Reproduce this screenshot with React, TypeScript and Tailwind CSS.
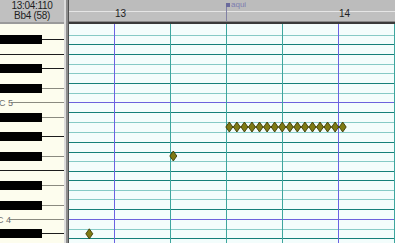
import React from "react";

// grid row lines (y in page coords) and their colour
const rowLines: { y: number; c: "l" | "d" | "c" }[] = [
  { y: 35, c: "l" }, { y: 44, c: "d" }, { y: 54, c: "d" }, { y: 64, c: "l" },
  { y: 73, c: "l" }, { y: 83, c: "d" }, { y: 93, c: "l" }, { y: 102, c: "c" },
  { y: 112, c: "d" }, { y: 122, c: "l" }, { y: 132, c: "l" }, { y: 142, c: "d" },
  { y: 152, c: "d" }, { y: 161, c: "l" }, { y: 171, c: "d" }, { y: 180, c: "d" },
  { y: 190, c: "l" }, { y: 199, c: "l" }, { y: 209, c: "d" }, { y: 219, c: "c" },
  { y: 229, c: "l" }, { y: 238, c: "d" },
];

const lineColor = { l: "#86cac6", d: "#15807a", c: "#6c62dc" };

// vertical lines: bars are violet, beats teal
const beats = [
  { x: 114, bar: true }, { x: 170, bar: false }, { x: 226, bar: false },
  { x: 282, bar: false }, { x: 338, bar: true }, { x: 394, bar: false },
];

// black keys: top y of each, 9px tall
const blackKeys = [35, 64, 84, 113, 132, 152, 181, 201, 229];
// short separator lines in the middle of black keys
const keyLines = [
  { y: 39, dark: true }, { y: 68, dark: true }, { y: 88, dark: false },
  { y: 117, dark: false }, { y: 136, dark: true }, { y: 156, dark: false },
  { y: 185, dark: false }, { y: 205, dark: false }, { y: 233, dark: true },
];

const runNotes = Array.from({ length: 16 }, (_, i) => 229.3 + i * 7.56);

function Diamond({ cx, cy }: { cx: number; cy: number }) {
  return (
    <polygon
      points={`${cx},${cy - 5} ${cx + 3.5},${cy} ${cx},${cy + 5} ${cx - 3.5},${cy}`}
      fill="#7e7a14"
      stroke="#3c3a04"
      strokeWidth={0.9}
    />
  );
}

function Keyboard() {
  return (
    <svg width={64} height={219} viewBox="0 24 64 219" className="block">
      <rect x={0} y={24} width={64} height={219} fill="#fdfdee" />
      {keyLines.map((k) => (
        <line key={k.y} x1={42} x2={64} y1={k.y + 0.5} y2={k.y + 0.5} stroke={k.dark ? "#1c1c1c" : "#8a8a80"} />
      ))}
      <line x1={0} x2={64} y1={54.5} y2={54.5} stroke="#1c1c1c" />
      <line x1={0} x2={64} y1={170.5} y2={170.5} stroke="#1c1c1c" />
      <line x1={11} x2={64} y1={102.5} y2={102.5} stroke="#8a8a80" />
      <line x1={9} x2={64} y1={219.5} y2={219.5} stroke="#8a8a80" />
      {blackKeys.map((y) => (
        <rect key={y} x={0} y={y} width={42} height={9} fill="#000" />
      ))}
      <text x={-1} y={106} fontSize={9} fill="#6e6e6e" fontFamily="Liberation Sans, Arial, sans-serif">
        C 5
      </text>
      <text x={-3} y={223} fontSize={9} fill="#6e6e6e" fontFamily="Liberation Sans, Arial, sans-serif">
        C 4
      </text>
    </svg>
  );
}

function NoteGrid() {
  return (
    <svg width={326} height={219} viewBox="69 24 326 219" className="block">
      <rect x={69} y={24} width={326} height={219} fill="#f3fdfc" />
      {rowLines.map((r) => (
        <line key={r.y} x1={69} x2={395} y1={r.y + 0.5} y2={r.y + 0.5} stroke={lineColor[r.c]} />
      ))}
      {beats.map((b) => (
        <line key={b.x} x1={b.x + 0.5} x2={b.x + 0.5} y1={24} y2={243} stroke={b.bar ? "#6a62e2" : "#3ea69e"} />
      ))}
      <line x1={runNotes[0]} x2={runNotes[15]} y1={127} y2={127} stroke="#3c3a04" />
      {runNotes.map((x) => (
        <Diamond key={x} cx={x} cy={127} />
      ))}
      <Diamond cx={173.3} cy={156} />
      <Diamond cx={89.3} cy={233.8} />
    </svg>
  );
}

export default function App() {
  return (
    <div
      className="w-[395px] h-[243px] overflow-hidden flex flex-col bg-[#c0c0c0] text-[#1e1e1e]"
      style={{ fontFamily: '"Liberation Sans", Arial, sans-serif' }}
    >
      {/* header */}
      <div className="h-[24px] flex shrink-0">
        <div className="w-[64px] flex flex-col items-center pt-[1px] bg-[#c0c0c0] border-b-2 border-[#9a9a9a]">
          <span className="text-[10px] leading-[10px] tracking-[-0.3px]">13:04:110</span>
          <span className="text-[10px] leading-[10px] tracking-[-0.3px]">Bb4 (58)</span>
        </div>
        <div className="w-[2px] bg-[#dcdcdc]" />
        <div className="w-[2px] bg-[#8c8c8c]" />
        <div className="w-[1px] bg-[#505050]" />
        <div className="flex-1 relative flex flex-col bg-[#c0c0c0]">
          <div className="h-[11px] bg-[#bcbcbc]" />
          <div className="h-[1px] bg-[#e6e6e6]" />
          <div className="flex-1" />
          <div className="h-[1px] bg-[#8a8a8a]" />
          <div className="h-[2px] bg-[#3a3a3a]" />
          <span className="absolute left-[46px] top-[9px] text-[10px] leading-[10px]">13</span>
          <span className="absolute left-[270px] top-[9px] text-[10px] leading-[10px]">14</span>
          {/* marker */}
          <div className="absolute left-[157px] top-[3px] w-[1px] h-[18px] bg-[#8080a4]" />
          <div className="absolute left-[157px] top-[3px] w-[4px] h-[4px] bg-[#6a6a9c]" />
          <span className="absolute left-[162px] top-[1px] text-[8px] leading-[8px] text-[#7c7cb0]">aqui</span>
        </div>
      </div>
      {/* body */}
      <div className="flex-1 flex">
        <div className="w-[64px]">
          <Keyboard />
        </div>
        <div className="w-[2px] bg-[#dcdcdc]" />
        <div className="w-[2px] bg-[#8c8c8c]" />
        <div className="w-[1px] bg-[#505050]" />
        <div className="flex-1">
          <NoteGrid />
        </div>
      </div>
    </div>
  );
}
